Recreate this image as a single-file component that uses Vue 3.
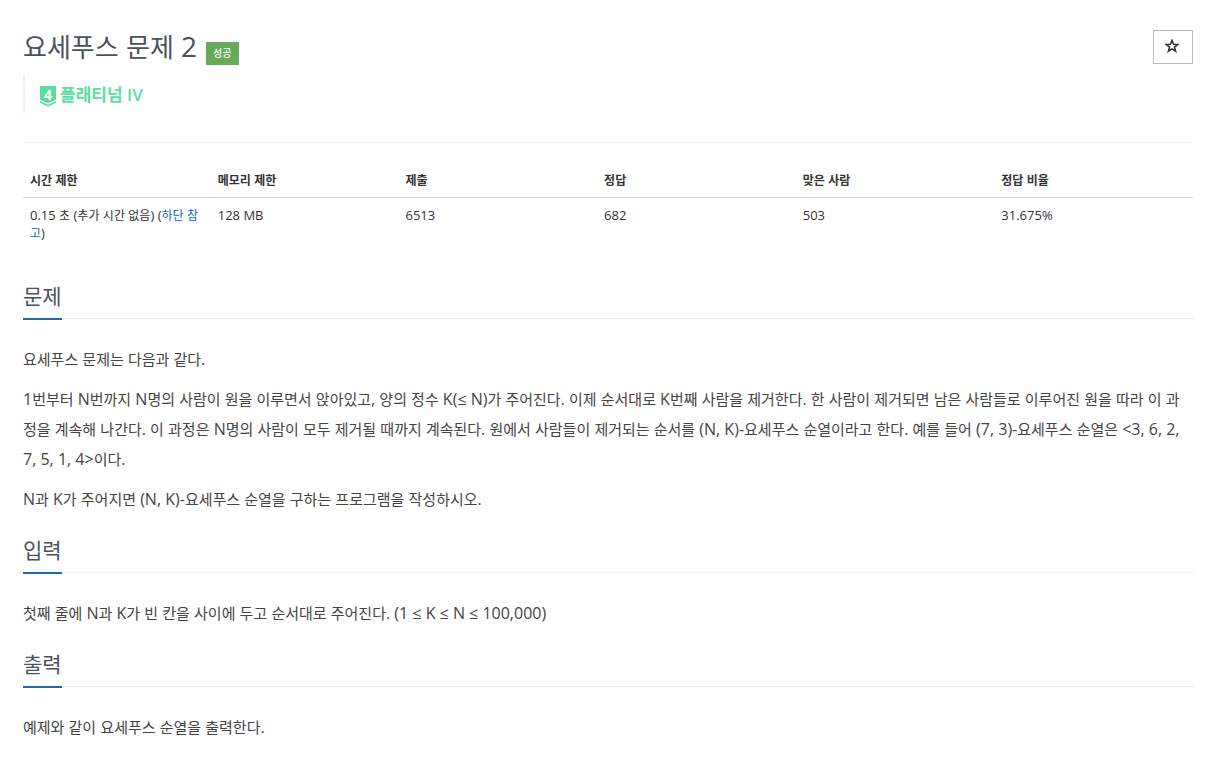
<script setup>
import { h } from 'vue'

// Hangul glyphs are wider than the Latin ones, so Hangul runs get a slightly smaller size.
const Mixed = ({ text }) =>
  text
    .split(/([\x20-\x7e≤]+)/)
    .filter(Boolean)
    .map((run) => (/^[\x20-\x7e≤]/.test(run) ? run : h('span', { class: 'ko' }, run)))
Mixed.props = ['text']

const columns = [
  { label: '시간 제한', width: 'c16' },
  { label: '메모리 제한', width: 'c16' },
  { label: '제출', width: 'c17' },
  { label: '정답', width: 'c17' },
  { label: '맞은 사람', width: 'c17' },
  { label: '정답 비율', width: 'c17' },
]
const stats = ['128 MB', '6513', '682', '503', '31.675%']
const sections = [
  {
    title: '문제',
    paragraphs: [
      '요세푸스 문제는 다음과 같다.',
      '1번부터 N번까지 N명의 사람이 원을 이루면서 앉아있고, 양의 정수 K(≤ N)가 주어진다. 이제 순서대로 K번째 사람을 제거한다. 한 사람이 제거되면 남은 사람들로 이루어진 원을 따라 이 과정을 계속해 나간다. 이 과정은 N명의 사람이 모두 제거될 때까지 계속된다. 원에서 사람들이 제거되는 순서를 (N, K)-요세푸스 순열이라고 한다. 예를 들어 (7, 3)-요세푸스 순열은 <3, 6, 2, 7, 5, 1, 4>이다.',
      'N과 K가 주어지면 (N, K)-요세푸스 순열을 구하는 프로그램을 작성하시오.',
    ],
  },
  { title: '입력', paragraphs: ['첫째 줄에 N과 K가 빈 칸을 사이에 두고 순서대로 주어진다. (1 ≤ K ≤ N ≤ 100,000)'] },
  { title: '출력', paragraphs: ['예제와 같이 요세푸스 순열을 출력한다.'] },
]
</script>

<template>
  <main class="page">
    <header class="head">
      <div class="head-main">
        <div class="title-row">
          <h1 class="title"><Mixed text="요세푸스 문제 2" /></h1>
          <span class="badge">성공</span>
        </div>
        <blockquote class="tier">
          <span class="tier-icon">
            <svg viewBox="0 0 16 21" width="16" height="21" aria-hidden="true">
              <path d="M0 0H16V13.6L8 17.4L0 13.6Z" fill="#5bdea0" />
              <path d="M0 15.8L8 19.6L16 15.8" fill="none" stroke="#5bdea0" stroke-width="1.6" />
            </svg>
            <b class="tier-num">4</b>
          </span>
          <span>플래티넘 IV</span>
        </blockquote>
      </div>
      <button class="star" type="button" aria-label="즐겨찾기">
        <svg viewBox="0 0 14 14" width="14" height="14" aria-hidden="true">
          <path d="M7 1.4L8.6 5.2L12.7 5.5L9.5 8.1L10.6 12.2L7 9.9L3.4 12.2L4.5 8.1L1.3 5.5L5.4 5.2Z" fill="none" stroke="#333" stroke-width="1.6" />
        </svg>
      </button>
    </header>

    <table class="info">
      <thead>
        <tr>
          <th v-for="c in columns" :key="c.label" :class="c.width" scope="col"><Mixed :text="c.label" /></th>
        </tr>
      </thead>
      <tbody>
        <tr>
          <td><Mixed text="0.15 초 (추가 시간 없음) (" /><a href="#limit"><Mixed text="하단 참고" /></a>)</td>
          <td v-for="s in stats" :key="s">{{ s }}</td>
        </tr>
      </tbody>
    </table>

    <section v-for="s in sections" :key="s.title" class="section">
      <div class="headline"><h2>{{ s.title }}</h2></div>
      <p v-for="p in s.paragraphs" :key="p"><Mixed :text="p" /></p>
    </section>
  </main>
</template>

<style>
body {
  margin: 0;
  background: #fff;
}
</style>

<style scoped>
.page {
  padding: 30px 36px 20px 23px;
  font-family: "Open Sans", "Noto Sans CJK KR", sans-serif;
  color: #333;
}
.head {
  display: flex;
  justify-content: space-between;
  align-items: flex-start;
  padding-bottom: 29px;
  border-bottom: 1px solid #eee;
}
.title-row {
  display: flex;
  align-items: flex-end;
  gap: 9px;
  height: 35px;
}
.title {
  margin: 0;
  font-size: 28px;
  line-height: 35px;
  font-weight: 400;
  color: #4b515d;
}
.title :deep(.ko) {
  font-size: 26px;
}
.badge {
  padding: 0 7px;
  background: #65ab59;
  color: #fff;
  font-size: 10px;
  line-height: 23px;
  font-weight: 500;
}
.tier {
  display: flex;
  align-items: center;
  gap: 4px;
  height: 36px;
  margin: 10px 0 0;
  padding: 2px 0 0 15px;
  border-left: 2px solid #eee;
  font-size: 17px;
  line-height: 24px;
  font-weight: 600;
  color: #5bdea0;
}
.tier-icon {
  position: relative;
  width: 16px;
  height: 21px;
  margin-top: 2px;
}
.tier-icon svg {
  display: block;
}
.tier-num {
  position: absolute;
  inset: 0;
  color: #fff;
  font-size: 14px;
  line-height: 17px;
  font-weight: 700;
  text-align: center;
}
.star {
  display: flex;
  align-items: center;
  justify-content: center;
  width: 40px;
  height: 34px;
  padding: 0 2px 2px 0;
  border: 1px solid #bbb;
  background: #fff;
}
.info {
  width: 100%;
  margin-top: 20px;
  table-layout: fixed;
  border-collapse: separate;
  border-spacing: 0;
  font-size: 13px;
  line-height: 18px;
}
.info th,
.info td {
  padding: 8px 8px 8px 7px;
  text-align: left;
  vertical-align: top;
}
.info th {
  border-bottom: 1px solid #d5d5d5;
  font-weight: 700;
}
.info :deep(.ko) {
  font-size: 12px;
  line-height: 16px;
}
.c16 {
  width: 16%;
}
.c17 {
  width: 17%;
}
a {
  color: #0a6ebd;
  text-decoration: none;
}
.section {
  padding-top: 9px;
}
.info + .section {
  padding-top: 29px;
}
.headline {
  margin-bottom: 25px;
  border-bottom: 1px dotted #dde2ea;
}
.headline h2 {
  display: inline-block;
  margin: 0 0 -2px;
  padding-bottom: 4px;
  border-bottom: 2px solid #2269b5;
  font-size: 21px;
  line-height: 35px;
  font-weight: 400;
  vertical-align: top;
  color: #4b515d;
}
.section p {
  margin: 0 0 10px;
  font-size: 16px;
  line-height: 30px;
  color: #444;
}
.section p :deep(.ko) {
  font-size: 15px;
  line-height: 28px;
}
</style>
